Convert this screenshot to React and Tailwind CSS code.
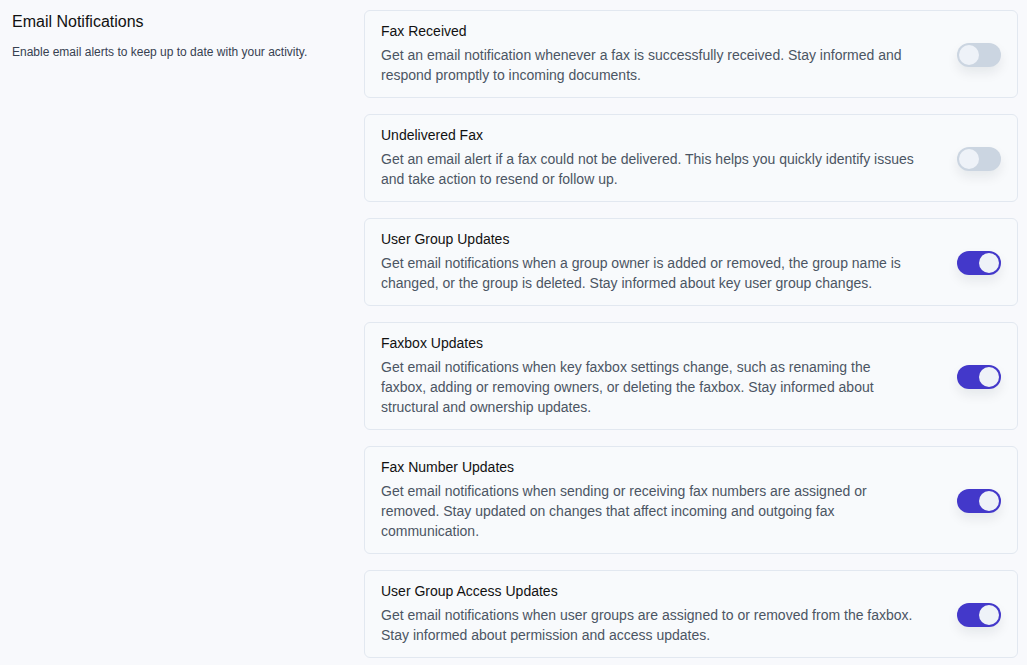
import React, { useState } from "react";

const items = [
  {
    title: "Fax Received",
    desc: "Get an email notification whenever a fax is successfully received. Stay informed and respond promptly to incoming documents.",
    on: false,
  },
  {
    title: "Undelivered Fax",
    desc: "Get an email alert if a fax could not be delivered. This helps you quickly identify issues and take action to resend or follow up.",
    on: false,
  },
  {
    title: "User Group Updates",
    desc: "Get email notifications when a group owner is added or removed, the group name is changed, or the group is deleted. Stay informed about key user group changes.",
    on: true,
  },
  {
    title: "Faxbox Updates",
    desc: "Get email notifications when key faxbox settings change, such as renaming the faxbox, adding or removing owners, or deleting the faxbox. Stay informed about structural and ownership updates.",
    on: true,
  },
  {
    title: "Fax Number Updates",
    desc: "Get email notifications when sending or receiving fax numbers are assigned or removed. Stay updated on changes that affect incoming and outgoing fax communication.",
    on: true,
  },
  {
    title: "User Group Access Updates",
    desc: "Get email notifications when user groups are assigned to or removed from the faxbox. Stay informed about permission and access updates.",
    on: true,
  },
];

function Toggle({ on, onClick }) {
  return (
    <button
      onClick={onClick}
      className={`relative mt-1 flex h-6 w-11 shrink-0 items-center rounded-full p-[2px] shadow-[0_6px_12px_rgba(15,23,42,0.08)] ${
        on ? "justify-end bg-[#4338ca]" : "justify-start bg-[#cbd5e1]"
      }`}
    >
      <span className="block h-5 w-5 rounded-full bg-[#eef2f8]" />
    </button>
  );
}

export default function App() {
  const [state, setState] = useState(items.map((i) => i.on));
  return (
    <div
      className="flex min-h-[665px] bg-[#f8f9fc] pl-3 pr-[9px] pt-[10px] text-[#111827]"
      style={{ fontFamily: '"Liberation Sans", Arial, sans-serif' }}
    >
      <div className="w-[352px] shrink-0">
        <h2 className="text-[16px] leading-6 text-[#111]">Email Notifications</h2>
        <p className="mt-[10px] text-[12px] leading-4 text-[#374151]">
          Enable email alerts to keep up to date with your activity.
        </p>
      </div>
      <div className="flex flex-1 flex-col gap-4">
        {items.map((it, i) => (
          <div
            key={it.title}
            className="flex items-center justify-between rounded-md border border-[#e2e8f0] bg-[#f8fafc] px-4 pb-3 pt-[10px]"
          >
            <div className="w-[534px]">
              <div className="text-[14px] leading-5 text-[#111]">{it.title}</div>
              <div className="mt-1 text-[14px] leading-5 text-[#4b5563]">{it.desc}</div>
            </div>
            <Toggle
              on={state[i]}
              onClick={() =>
                setState((s) => s.map((v, j) => (j === i ? !v : v)))
              }
            />
          </div>
        ))}
      </div>
    </div>
  );
}
